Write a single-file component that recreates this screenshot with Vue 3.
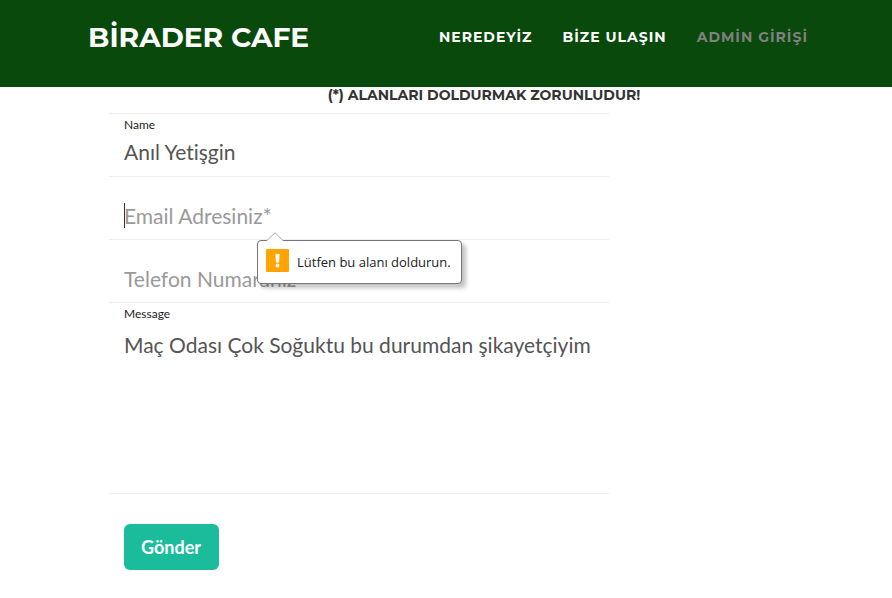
<script setup>
import { ref } from 'vue'

const links = [
  { text: 'NEREDEYİZ', href: '#neredeyiz' },
  { text: 'BİZE ULAŞIN', href: '#iletisim' },
  { text: 'ADMİN GİRİŞİ', href: '#admin', muted: true },
]
const name = ref('Anıl Yetişgin')
const email = ref('')
const phone = ref('')
const message = ref('Maç Odası Çok Soğuktu bu durumdan şikayetçiyim')
</script>

<template>
  <header class="navbar">
    <div class="navbar-inner">
      <a class="brand" href="#top">BİRADER CAFE</a>
      <nav class="links">
        <a v-for="link in links" :key="link.href" :href="link.href" :class="{ muted: link.muted }">{{ link.text }}</a>
      </nav>
    </div>
  </header>
  <main class="content">
    <h1 class="notice">(*) ALANLARI DOLDURMAK ZORUNLUDUR!</h1>
    <form class="form" novalidate @submit.prevent>
      <div class="row">
        <label for="name">Name</label>
        <input id="name" v-model="name" type="text">
      </div>
      <div class="row">
        <label for="email" class="empty">Email</label>
        <input id="email" v-model="email" type="email" placeholder="Email Adresiniz*" aria-describedby="hint">
        <span class="caret"></span>
        <div id="hint" class="bubble" role="alert">
          <svg class="arrow" width="18" height="10" viewBox="0 0 18 10" aria-hidden="true">
            <path d="M0 10 L1 8.5 L9 0.7 L17 8.5 L18 10 Z" fill="#fff" />
            <path d="M1 8.5 L9 0.7 L17 8.5" fill="none" stroke="#a8a8a8" />
          </svg>
          <svg class="warn" width="23" height="23" viewBox="0 0 23 23" aria-hidden="true">
            <rect width="23" height="23" rx="1" fill="#ffa400" />
            <path d="M9.5 5h4l-.4 8.5h-3.2z" fill="#fff" />
            <circle cx="11.5" cy="16.5" r="1.9" fill="#fff" />
          </svg>
          <span>Lütfen bu alanı doldurun.</span>
        </div>
      </div>
      <div class="row">
        <label for="phone" class="empty">Phone</label>
        <input id="phone" v-model="phone" type="tel" placeholder="Telefon Numaranız">
      </div>
      <div class="row">
        <label for="message">Message</label>
        <textarea id="message" v-model="message" rows="5"></textarea>
      </div>
      <button class="submit" type="submit">Gönder</button>
    </form>
  </main>
</template>

<style>
body {
  margin: 0;
  background: #fff;
}
</style>

<style scoped>
.navbar {
  background: #09490b;
  font-family: Montserrat, Inter, sans-serif;
  font-weight: 700;
}
.navbar-inner {
  box-sizing: border-box;
  display: flex;
  align-items: flex-start;
  justify-content: space-between;
  max-width: 750px;
  margin: 0 auto;
  padding: 17px 13px 30px 17px;
}
.brand {
  color: #fff;
  font-size: 28px;
  line-height: 40px;
  text-decoration: none;
  white-space: nowrap;
}
.links {
  display: flex;
  gap: 30px;
  padding-top: 10px;
}
.links a {
  color: #fff;
  font-size: 14px;
  line-height: 20px;
  letter-spacing: 1px;
  text-decoration: none;
  white-space: nowrap;
}
.links .muted {
  color: #808080;
}
.content {
  padding: 0 33px 28px 109px;
  font-family: Lato, sans-serif;
}
.notice {
  margin: 0;
  padding-bottom: 10px;
  color: #333;
  font: 700 14px/16px Montserrat, Inter, sans-serif;
  text-align: center;
}
.form {
  max-width: 500px;
}
.row {
  position: relative;
  border-bottom: 1px solid #eee;
  padding: 3px 15px 8px;
}
.row:first-child {
  border-top: 1px solid #eee;
}
.row label {
  display: block;
  padding-bottom: 1px;
  color: #222;
  font-size: 12px;
  line-height: 16px;
}
.row .empty {
  opacity: 0;
}
.row input,
.row textarea {
  display: block;
  box-sizing: border-box;
  width: 100%;
  border: 0;
  padding: 0;
  outline: 0;
  background: transparent;
  color: #555;
  font: 21px/32px Lato, sans-serif;
  font-variant-ligatures: none;
  resize: none;
}
.row input {
  height: 34px;
}
.row input:placeholder-shown {
  padding-top: 2px;
}
.row textarea {
  height: 162px;
  padding-top: 6px;
  overflow: hidden;
}
.row ::placeholder {
  color: #999;
  opacity: 1;
}
.caret {
  position: absolute;
  left: 15px;
  top: 26px;
  width: 1px;
  height: 25px;
  background: #333;
}
.bubble {
  position: absolute;
  z-index: 1;
  left: 148px;
  top: 63px;
  display: flex;
  align-items: flex-start;
  gap: 8px;
  box-sizing: border-box;
  height: 44px;
  border: 1px solid #777;
  border-radius: 4px;
  padding: 8px 10px 0 8px;
  background: #fff;
  box-shadow: 4px 4px 4px rgba(0, 0, 0, 0.24);
  color: #222;
  font: 13px/26px "Open Sans", "Noto Sans", sans-serif;
  white-space: nowrap;
}
.arrow {
  position: absolute;
  left: 8px;
  top: -9px;
}
.submit {
  margin: 30px 0 0 15px;
  border: 0;
  border-radius: 6px;
  padding: 10px 18px 10px 17px;
  background: #1abc9c;
  color: #fff;
  font: 700 18px/26px Lato, sans-serif;
}
</style>
